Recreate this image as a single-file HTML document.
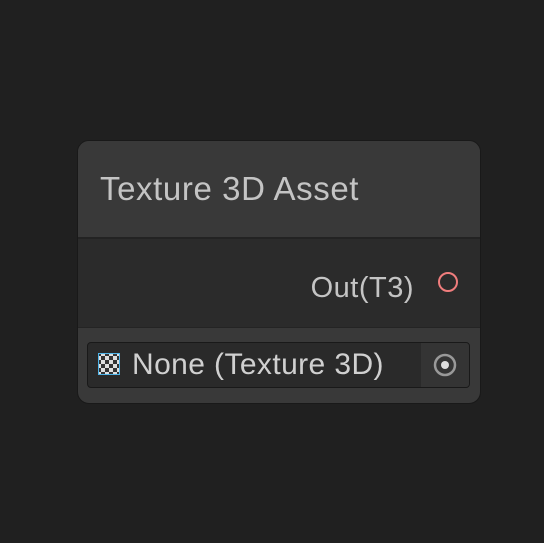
<!DOCTYPE html>
<html><head><style>
body{margin:0;width:544px;height:543px;background:#202020;overflow:hidden;font-family:"Liberation Sans",sans-serif;}
.node{position:absolute;left:77px;top:140px;width:402px;height:262px;border:1px solid #191919;border-radius:12px;background:#393939;overflow:hidden;}
.hdr{position:absolute;left:0;top:0;width:100%;height:96px;background:#393939;border-bottom:2px solid #232323;}
.title{position:absolute;left:22px;top:29px;font-size:33px;color:#c4c4c4;letter-spacing:0.6px;}
.body{position:absolute;left:0;top:98px;width:100%;height:88px;background:#2b2b2b;border-bottom:1px solid #242424;}
.out{position:absolute;right:66px;top:33px;font-size:29px;color:#c4c4c4;letter-spacing:0.5px;}
.port{position:absolute;left:360px;top:33px;width:16px;height:16px;border:2.5px solid #f07d7d;border-radius:50%;}
.field{position:absolute;left:9px;top:201px;width:381px;height:44px;background:#2a2a2a;border:1px solid #191919;border-radius:4px;overflow:hidden;}
.btn{position:absolute;right:0;top:0;width:48px;height:44px;background:#343434;}
.none{position:absolute;left:44px;top:5px;font-size:30px;color:#d0d0d0;letter-spacing:0.4px;}
.chk{position:absolute;left:10px;top:10px;width:20px;height:20px;border:1.5px solid #4fb4e8;background:
repeating-conic-gradient(#ddd 0 25%,#333 0 50%) 2px 2px/8px 8px;}
</style></head><body>
<div class="node">
 <div class="hdr"><div class="title">Texture 3D Asset</div></div>
 <div class="body"><div class="out">Out(T3)</div><div class="port"></div></div>
 <div class="field">
  <div class="chk"></div>
  <div class="none">None (Texture 3D)</div>
  <div class="btn"><svg width="48" height="44"><circle cx="24" cy="22" r="10" fill="none" stroke="#999" stroke-width="2.5"/><circle cx="24" cy="22" r="4" fill="#ddd"/></svg></div>
 </div>
</div>
</body></html>
